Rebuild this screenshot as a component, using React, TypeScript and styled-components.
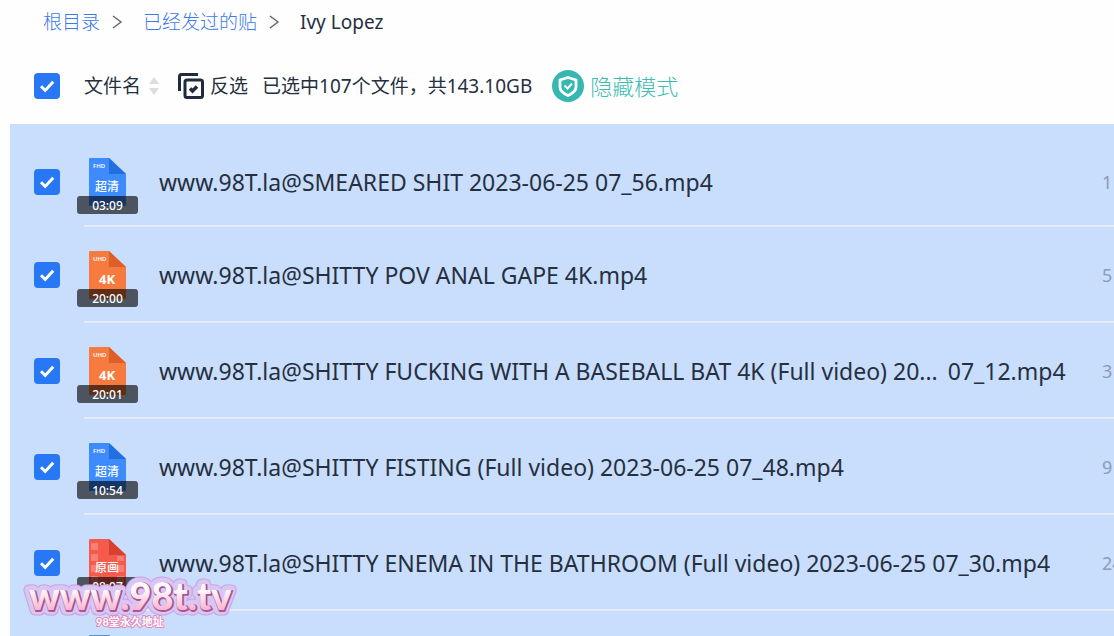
import React from "react";
import styled, { createGlobalStyle } from "styled-components";

const Global = createGlobalStyle`
  * { box-sizing: border-box; }
  body {
    margin: 0;
    background: #fefefe;
    color: #25303f;
    font-family: "Noto Sans", "Noto Sans CJK SC", sans-serif;
    font-size: 19px;
    line-height: 28px;
  }
`;

const Page = styled.main`
  position: relative;
  height: 100vh;
  overflow: hidden;
`;

const Breadcrumb = styled.nav`
  display: flex;
  align-items: center;
  height: 48px;
  padding: 0 43px 4px;
`;

const Crumb = styled.a`
  color: #3a7be8;
  font-weight: 300;
  text-decoration: none;
`;

const Separator = styled.svg`
  flex: none;
  width: 12px;
  height: 16px;
  margin: 0 20px 0 11px;
  fill: none;
  stroke: #60656d;
  stroke-width: 1.4;
`;

const Toolbar = styled.header`
  display: flex;
  align-items: center;
  height: 76px;
  padding-left: 34px;
  white-space: nowrap;
`;

const Check = styled.input`
  appearance: none;
  flex: none;
  width: 26px;
  height: 26px;
  margin: 0;
  border-radius: 4px;
  background: #c3cede;
  &:checked {
    background: #2878f5 url("data:image/svg+xml,%3Csvg xmlns='http://www.w3.org/2000/svg' viewBox='0 0 26 26'%3E%3Cpath d='M7 13.2l4.2 4.2 8-8.6' fill='none' stroke='white' stroke-width='3'/%3E%3C/svg%3E");
  }
`;

const ToolButton = styled.button<{ $accent?: boolean }>`
  display: flex;
  align-items: center;
  gap: 6px;
  padding: 0;
  border: 0;
  background: none;
  color: ${(p) => (p.$accent ? "#3dbdb1" : "inherit")};
  font: inherit;
  font-weight: ${(p) => (p.$accent ? 300 : 400)};
  font-size: ${(p) => (p.$accent ? "22px" : "19px")};
`;

const SortButton = styled(ToolButton)`
  gap: 8px;
  margin: 0 19px 0 24px;
`;

const Summary = styled.span`
  margin: 0 20px 0 14px;
`;

const FileList = styled.ul`
  margin: 0 0 0 10px;
  padding: 13px 0 0;
  list-style: none;
  background: #c9ddfd;
`;

const FileItem = styled.li`
  &::after {
    content: "";
    display: block;
    height: 2px;
    margin-left: 74px;
    background: #e6ebfb;
  }
`;

const Row = styled.label<{ $first: boolean }>`
  display: flex;
  align-items: center;
  height: ${(p) => (p.$first ? "88px" : "94px")};
  padding: 2px 0 0 24px;
`;

const Thumb = styled.span`
  position: relative;
  flex: none;
  width: 61px;
  height: 64px;
  margin: 0 21px 0 17px;
  padding: 8px 12px 0;
`;

const Duration = styled.time`
  position: absolute;
  left: 0;
  right: 0;
  bottom: 0;
  height: 18px;
  border-radius: 3px;
  background: rgba(0, 0, 0, 0.62);
  color: #fff;
  font-size: 12px;
  font-weight: 500;
  line-height: 19px;
  text-align: center;
`;

const Name = styled.span`
  display: flex;
  flex: 1;
  gap: 10px;
  min-width: 0;
  overflow: hidden;
  font-size: 23px;
  line-height: 32px;
  white-space: nowrap;
`;

const Size = styled.span`
  flex: none;
  width: 12px;
  overflow: hidden;
  color: #8c9bb6;
  font-size: 18px;
`;

const Watermark = styled.svg`
  position: absolute;
  left: 20px;
  bottom: 0;
  width: 220px;
  height: 66px;
  font-family: "Lato", "Noto Sans CJK SC", sans-serif;
  font-weight: 900;
  stroke-linejoin: round;
  pointer-events: none;
`;

type Kind = "fhd" | "uhd" | "raw" | "plain";

const kinds: Record<Kind, { tag?: string; label?: string; fill: string; fold: string }> = {
  fhd: { tag: "FHD", label: "超清", fill: "#3d8bfd", fold: "#2170dd" },
  uhd: { tag: "UHD", label: "4K", fill: "#f77a3e", fold: "#dc602a" },
  raw: { label: "原画", fill: "#f55b4d", fold: "#d8402f" },
  plain: { fill: "#4a97c8", fold: "#2f7fb0" },
};

function FileIcon({ kind }: { kind: Kind }) {
  const k = kinds[kind];
  return (
    <svg width="37" height="50" viewBox="0 0 37 50" display="block" aria-hidden="true">
      <path d="M1 0H20L37 16V47Q37 48 36 48H1Q0 48 0 47V1Q0 0 1 0Z" fill={k.fill} />
      {kind === "raw" && (
        <path
          d="M2 4h7v7H2zM2 15h7v7H2zM2 26h7v7H2zM2 37h7v7H2zM28 17h7v5h-7zM28 26h7v7h-7zM28 37h7v7h-7z"
          fill="#fff"
          opacity=".22"
        />
      )}
      <path d="M20 0L37 16H20Z" fill={k.fold} />
      {k.tag && (
        <text x="4" y="10" fontSize="6" fontWeight="600" fill="#fff">{k.tag}</text>
      )}
      {k.label && (
        <text x="18" y="33" fontSize={kind === "uhd" ? 13 : 12} fontWeight={kind === "uhd" ? 700 : 500} textAnchor="middle" fill="#fff">
          {k.label}
        </text>
      )}
    </svg>
  );
}

const files: { name?: string; tail?: string; kind: Kind; time?: string; size?: string }[] = [
  { name: "www.98T.la@SMEARED SHIT 2023-06-25 07_56.mp4", kind: "fhd", time: "03:09", size: "1" },
  { name: "www.98T.la@SHITTY POV ANAL GAPE 4K.mp4", kind: "uhd", time: "20:00", size: "5" },
  {
    name: "www.98T.la@SHITTY FUCKING WITH A BASEBALL BAT 4K (Full video) 20...",
    tail: "07_12.mp4",
    kind: "uhd",
    time: "20:01",
    size: "3",
  },
  { name: "www.98T.la@SHITTY FISTING (Full video) 2023-06-25 07_48.mp4", kind: "fhd", time: "10:54", size: "9" },
  { name: "www.98T.la@SHITTY ENEMA IN THE BATHROOM (Full video) 2023-06-25 07_30.mp4", kind: "raw", time: "08:07", size: "24" },
  { kind: "plain" },
];

function Chevron() {
  return (
    <Separator viewBox="0 0 12 16" aria-hidden="true">
      <path d="M2 2l8 6-8 6" />
    </Separator>
  );
}

export default function App() {
  return (
    <Page>
      <Global />
      <Breadcrumb>
        <Crumb href="#root">根目录</Crumb>
        <Chevron />
        <Crumb href="#posted">已经发过的贴</Crumb>
        <Chevron />
        <span>Ivy Lopez</span>
      </Breadcrumb>
      <Toolbar>
        <Check type="checkbox" defaultChecked aria-label="全选" />
        <SortButton>
          文件名
          <svg width="10" height="18" viewBox="0 0 10 18" fill="#dcdddf" aria-hidden="true">
            <path d="M5 0l5 7H0zM5 18l5-7H0z" />
          </svg>
        </SortButton>
        <ToolButton>
          <svg width="26" height="26" viewBox="0 0 26 26" fill="none" stroke="#1f2b3a" strokeWidth="3" aria-hidden="true">
            <path d="M1.5 18V3.5Q1.5 1.5 3.5 1.5H20" />
            <rect x="7" y="7" width="17.5" height="17.5" rx="2" />
            <path d="M12 15.5l2.500 2.500 4.500-4.500" strokeWidth="3.500" />
          </svg>
          反选
        </ToolButton>
        <Summary>已选中107个文件，共143.10GB</Summary>
        <ToolButton $accent>
          <svg width="32" height="32" viewBox="0 0 32 32" fill="none" aria-hidden="true">
            <circle cx="16" cy="16" r="16" fill="#36b8b0" />
            <path d="M16 7.5l8 2.5v7q0 5-8 8.5-8-3.5-8-8.5v-7z" stroke="#fff" strokeWidth="2.800" />
            <path d="M12.5 15.5l3 3 4.500-5" stroke="#fff" strokeWidth="2" />
          </svg>
          隐藏模式
        </ToolButton>
      </Toolbar>
      <FileList>
        {files.map((f, i) => (
          <FileItem key={i}>
            <Row $first={i === 0}>
              <Check type="checkbox" defaultChecked />
              <Thumb>
                <FileIcon kind={f.kind} />
                {f.time && <Duration>{f.time}</Duration>}
              </Thumb>
              <Name>
                <span>{f.name}</span>
                {f.tail && <span>{f.tail}</span>}
              </Name>
              <Size>{f.size}</Size>
            </Row>
          </FileItem>
        ))}
      </FileList>
      <Watermark viewBox="0 0 220 66" aria-label="www.98t.tv">
        <defs>
          <linearGradient id="pink" x1="0" y1="0" x2="0" y2="1">
            <stop offset="0.4" stopColor="#fff8fb" />
            <stop offset="0.85" stopColor="#f9b0d0" />
          </linearGradient>
        </defs>
        <use href="#site" stroke="#cf9fdc" strokeWidth="11" />
        <use href="#site" stroke="#d9c6f5" strokeWidth="9" />
        <use href="#site" x="1" y="1" stroke="#a8588f" strokeWidth="2" />
        <text id="site" x="110" y="40" fontSize="38" textAnchor="middle" fill="url(#pink)">www.98t.tv</text>
        <text x="110" y="56" fontSize="11" fontWeight="700" textAnchor="middle" fill="#fff" stroke="#e488bd" strokeWidth="2" paintOrder="stroke">
          98堂永久地址
        </text>
      </Watermark>
    </Page>
  );
}
